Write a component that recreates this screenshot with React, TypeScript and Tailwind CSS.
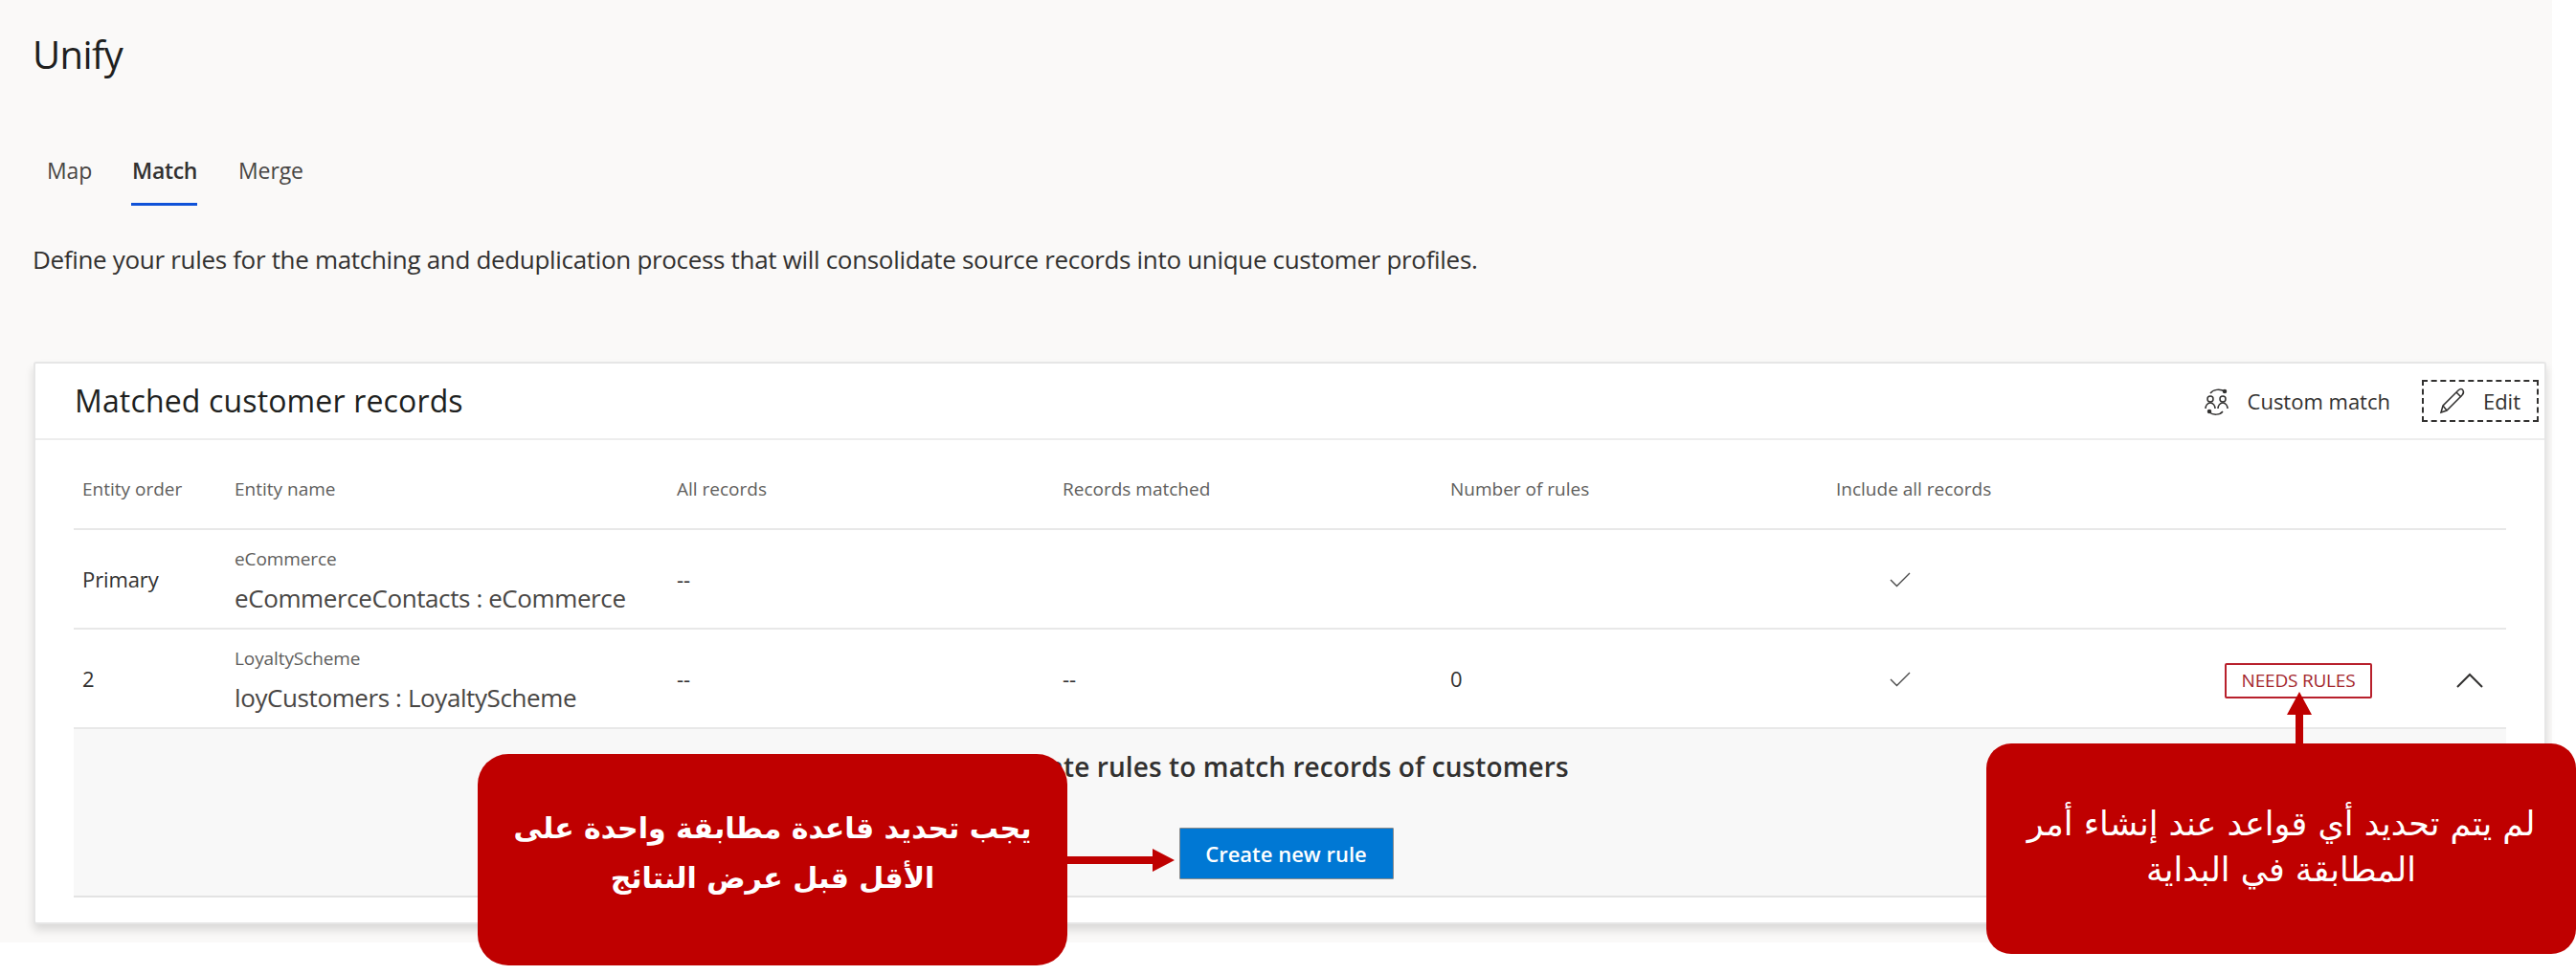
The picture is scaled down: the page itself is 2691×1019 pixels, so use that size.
const ui = { fontFamily: '"Open Sans", "Noto Sans", sans-serif' };
const ar = { fontFamily: '"DejaVu Sans", sans-serif' };

function Check() {
  return (
    <svg width="24" height="24" viewBox="0 0 24 24" fill="none" stroke="#4a4a4a" strokeWidth="1.4">
      <path d="M2 13l6.5 6.5L22 6" />
    </svg>
  );
}

function Row({ order, sub, name, all, matched, rules, extra }: { order: string; sub: string; name: string; all: string; matched?: string; rules?: string; extra?: boolean }) {
  return (
    <div className="relative grid grid-cols-[168px_462px_403px_405px_403px_1fr] h-[104px] items-center border-b-2 border-[#e8e8e8] pl-[9px] text-[#323130]">
      <div className="text-[22px] tracking-[-0.1px]">{order}</div>
      <div className="-ml-[9px] pt-[4px]">
        <div className="text-[19px] text-[#605e5c] tracking-[-0.1px] leading-[24px]">{sub}</div>
        <div className="text-[26px] text-[#484644] tracking-[-0.4px] leading-[36px] mt-[11px]">{name}</div>
      </div>
      <div className="text-[22px] -ml-[9px]">{all}</div>
      <div className="text-[22px] -ml-[9px]">{matched}</div>
      <div className="text-[22px] -ml-[9px]">{rules}</div>
      <div className="pl-[55px] -ml-[9px]"><Check /></div>
      {extra && (
        <div className="absolute right-[24px] top-[11px] flex items-center gap-[88px] h-[84px]">
          <div className="flex h-[37px] w-[154px] items-center justify-center rounded-[2px] border-2 border-[#b8202c] text-[19px] text-[#a4262c] tracking-[-0.2px] bg-white">NEEDS RULES</div>
          <svg width="28" height="16" viewBox="0 0 28 16" fill="none" stroke="#323130" strokeWidth="2"><path d="M1 15L14 2l13 13" /></svg>
        </div>
      )}
    </div>
  );
}

export default function App() {
  return (
    <div className="relative h-[1019px] w-[2691px] overflow-hidden bg-white" style={ui}>
      <div className="h-[985px] w-[2666px] bg-[#faf9f8] pt-[31px]">
        <h1 className="pl-[34px] text-[40px] leading-[52px] font-medium text-[#201f1e] tracking-[-0.6px]">Unify</h1>
        <div className="mt-[70px] flex h-[56px] items-start pl-[49px] text-[23px] leading-[50px] text-[#484644] tracking-[-0.1px]">
          <span className="w-[89px]">Map</span>
          <span className="relative w-[111px] font-semibold text-[#323130] tracking-[-0.3px]">
            Match
            <span className="absolute -left-px top-[59px] h-[3px] w-[69px] bg-[#0f52d8]" />
          </span>
          <span>Merge</span>
        </div>
        <p className="mt-[44px] pl-[34px] text-[26px] leading-[36px] text-[#323130] tracking-[-0.32px]">
          Define your rules for the matching and deduplication process that will consolidate source records into unique customer profiles.
        </p>

        <section className="ml-[35px] mt-[89px] w-[2625px] h-[588px] rounded-[3px] border-2 border-[#e6e6e6] bg-white shadow-[0_6px_10px_rgba(0,0,0,0.13)]">
          <header className="flex h-[80px] items-center justify-between border-b-2 border-[#ededed] pl-[41px] pr-[6px]">
            <h2 className="text-[32px] font-normal text-[#201f1e] tracking-[0.15px]">Matched customer records</h2>
            <div className="flex items-center text-[22px] text-[#323130]">
              <svg width="30" height="30" viewBox="0 0 30 30" fill="none" stroke="#323130" strokeWidth="1.5" className="mr-[17px]">
                <circle cx="8" cy="13" r="3" />
                <path d="M3 23c0-3 2-6 5-6s5 3 5 6" />
                <circle cx="21" cy="13" r="3" />
                <path d="M16 23c0-3 2-6 5-6s5 3 5 6" />
                <path d="M8 7c3-4 10-5 15-2" />
                <path d="M21 26c-3 4-10 4-14 1" />
                <circle cx="23" cy="5" r="1.500" fill="#323130" />
                <circle cx="7" cy="26" r="1.500" fill="#323130" />
              </svg>
              <span className="mr-[33px]">Custom match</span>
              <div className="flex h-[44px] w-[122px] items-center justify-between border-2 border-dashed border-[#323130] pl-[16px] pr-[17px]">
                <svg width="28" height="28" viewBox="0 0 28 28" fill="none" stroke="#323130" strokeWidth="1.5">
                  <path d="M2 26l2-7L20 3c2-2 4-2 5 0s1 3-1 5L8 24z" />
                  <path d="M4 19l4 5M18 5l5 5" />
                </svg>
                <span>Edit</span>
              </div>
            </div>
          </header>

          <div className="mx-[40px]">
            <div className="grid h-[94px] grid-cols-[168px_462px_403px_405px_403px_1fr] items-center border-b-2 border-[#e8e8e8] pl-[9px] pt-[10px] text-[19px] text-[#605e5c]">
              <div>Entity order</div>
              <div className="-ml-[9px]">Entity name</div>
              <div className="-ml-[9px]">All records</div>
              <div className="-ml-[9px]">Records matched</div>
              <div className="-ml-[9px]">Number of rules</div>
              <div className="-ml-[9px]">Include all records</div>
            </div>
            <Row order="Primary" sub="eCommerce" name="eCommerceContacts : eCommerce" all="--" />
            <Row order="2" sub="LoyaltyScheme" name="loyCustomers : LoyaltyScheme" all="--" matched="--" rules="0" extra />
            <div className="flex h-[176px] flex-col items-center border-b-2 border-[#e3e3e3] bg-[#f8f8f8] pt-[21px] pr-[8px]">
              <div className="text-[28px] font-semibold text-[#323130] leading-[36px] tracking-[0.1px]">Create rules to match records of customers</div>
              <button className="mt-[46px] h-[54px] w-[224px] rounded-[1px] border border-[#8a8a8a] bg-[#0078d4] text-[22px] font-semibold text-white">Create new rule</button>
            </div>
          </div>
        </section>
      </div>

      {/* annotation arrows */}
      <svg className="absolute left-[1115px] top-[885px]" width="116" height="28" viewBox="0 0 116 28">
        <path d="M0 10h89V2l23 12-23 12v-8H0z" fill="#bf0000" />
      </svg>
      <svg className="absolute left-[2386px] top-[722px]" width="32" height="56" viewBox="0 0 32 56">
        <path d="M16 1l13 24h-9v31h-8V25H3z" fill="#bf0000" />
      </svg>

      {/* annotation callouts */}
      <div dir="rtl" className="absolute left-[499px] top-[788px] flex h-[221px] w-[616px] justify-center rounded-[32px] bg-[#bf0000] pt-[52px] text-center text-[30px] font-bold leading-[52px] text-white" style={ar}>
        <div>يجب تحديد قاعدة مطابقة واحدة على<br />الأقل قبل عرض النتائج</div>
      </div>
      <div dir="rtl" className="absolute left-[2075px] top-[777px] flex h-[220px] w-[616px] justify-center rounded-[26px] bg-[#bf0000] pt-[60px] text-center text-[35px] leading-[48px] text-white" style={ar}>
        <div>لم يتم تحديد أي قواعد عند إنشاء أمر<br />المطابقة في البداية</div>
      </div>
    </div>
  );
}
